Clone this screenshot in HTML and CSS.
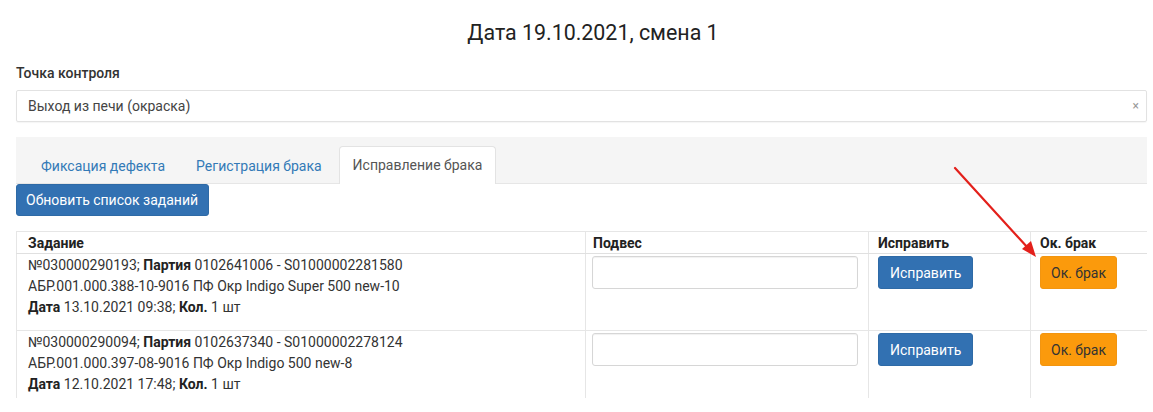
FILE: index.html
```html
<!DOCTYPE html>
<html lang="ru">
<head>
<meta charset="utf-8">
<title>Исправление брака</title>
<link rel="stylesheet" href="styles.css">
</head>
<body>
<div class="page">
  <h1 class="title">Дата 19.10.2021, смена 1</h1>
  <label class="field-label">Точка контроля</label>
  <div class="select">
    <span class="select-text">Выход из печи (окраска)</span>
    <span class="select-clear">×</span>
  </div>
  <div class="tabs">
    <a class="tab">Фиксация дефекта</a>
    <a class="tab">Регистрация брака</a>
    <a class="tab tab-active">Исправление брака</a>
  </div>
  <button class="btn btn-primary btn-refresh">Обновить список заданий</button>
  <div class="table-wrap">
    <table class="grid">
      <colgroup>
        <col class="c1"><col class="c2"><col class="c3"><col class="c4">
      </colgroup>
      <thead>
        <tr><th class="first">Задание</th><th>Подвес</th><th>Исправить</th><th>Ок. брак</th></tr>
      </thead>
      <tbody>
        <tr>
          <td class="first">
            <div>№030000290193; <b>Партия</b> 0102641006 - S01000002281580</div>
            <div>АБР.001.000.388-10-9016 ПФ Окр Indigo Super 500 new-10</div>
            <div><b>Дата</b> 13.10.2021 09:38; <b>Кол.</b> 1 шт</div>
          </td>
          <td><input class="input" type="text"></td>
          <td><button class="btn btn-primary">Исправить</button></td>
          <td><button class="btn btn-warning">Ок. брак</button></td>
        </tr>
        <tr>
          <td class="first">
            <div>№030000290094; <b>Партия</b> 0102637340 - S01000002278124</div>
            <div>АБР.001.000.397-08-9016 ПФ Окр Indigo 500 new-8</div>
            <div><b>Дата</b> 12.10.2021 17:48; <b>Кол.</b> 1 шт</div>
          </td>
          <td><input class="input" type="text"></td>
          <td><button class="btn btn-primary">Исправить</button></td>
          <td><button class="btn btn-warning">Ок. брак</button></td>
        </tr>
      </tbody>
    </table>
  </div>
</div>
<svg class="arrow" width="1153" height="412" viewBox="0 0 1153 412">
  <line x1="955" y1="168" x2="1028" y2="248" stroke="#e3201b" stroke-width="2.2" stroke-linecap="round"/>
  <polygon points="1036,257 1022,249 1031,241" fill="#e3201b"/>
</svg>
</body>
</html>
```
FILE: styles.css
```css
* { box-sizing: border-box; }
html, body { margin: 0; padding: 0; background: #fff; }
body {
  font-family: Roboto, "Noto Sans", "Liberation Sans", sans-serif;
  font-size: 14px;
  color: #333;
  position: relative;
  width: 1153px;
  height: 412px;
  overflow: hidden;
}
.page {
  padding: 21px 6px 0 16px;
  display: flex;
  flex-direction: column;
  align-items: stretch;
}
.title {
  margin: 0;
  font-size: 21.4px;
  line-height: 24px;
  font-weight: 400;
  color: #222;
  text-align: center;
  padding-left: 23px;
}
.field-label {
  margin-top: 18px;
  line-height: 20px;
  font-weight: 500;
  color: #333;
}
.select {
  margin-top: 7px;
  height: 32px;
  border: 1px solid #e2e2e2;
  border-radius: 2px;
  display: flex;
  align-items: center;
  justify-content: space-between;
  padding: 0 7px 0 11px;
  box-shadow: 0 1px 1px rgba(0,0,0,0.04);
}
.select-text { color: #444; }
.select-clear { color: #999; font-size: 12px; }
.tabs {
  margin-top: 15px;
  height: 47px;
  background: #f5f5f5;
  border-bottom: 1px solid #e6e6e6;
  display: flex;
  align-items: flex-end;
  gap: 3px;
  padding-left: 11px;
}
.tab {
  height: 37px;
  line-height: 36px;
  padding: 0 13px;
  color: #337ab7;
  border: 1px solid transparent;
  border-bottom: none;
  border-radius: 4px 4px 0 0;
  margin-bottom: -1px;
}
.tab-active {
  background: #fff;
  color: #555;
  border-color: #e3e3e3;
  height: 38px;
}
.btn {
  font-family: inherit;
  font-size: 14px;
  line-height: 20px;
  padding: 6px 12px;
  border: 1px solid transparent;
  border-radius: 3px;
  cursor: pointer;
  white-space: nowrap;
}
.btn-primary {
  background: #3271b2;
  border-color: #2e6aa6;
  color: #fff;
}
.btn-warning {
  background: #fb9a0c;
  border-color: #f29510;
  color: #333;
}
.btn-refresh {
  align-self: flex-start;
  height: 32px;
  padding: 0 10px 0 9px;
}
.table-wrap {
  margin-top: 15px;
  height: 167px;
  overflow: hidden;
}
.grid {
  width: 1131px;
  table-layout: fixed;
  border-collapse: collapse;
  border: 1px solid #e6e6e6;
}
.c1 { width: 569px; }
.c2 { width: 283px; }
.c3 { width: 162px; }
.c4 { width: 117px; }
.grid th {
  text-align: left;
  font-weight: 700;
  color: #222;
  line-height: 20px;
  padding: 1px 8px 0 9px;
  border-left: 1px solid #e6e6e6;
  border-bottom: 1px solid #e0e0e0;
  border-top: 1px solid #e6e6e6;
}
.grid td {
  vertical-align: top;
  line-height: 21px;
  padding: 1px 8px 12px 9px;
  border-left: 1px solid #e6e6e6;
  border-bottom: 1px solid #e6e6e6;
}
.grid td.first, .grid th.first { padding-left: 11px; }
.grid th:nth-child(2) { padding-left: 7px; }
.grid td:nth-child(2) { padding-left: 6px; padding-right: 10px; }
.grid td b { font-weight: 700; color: #222; }
.input {
  display: block;
  width: 100%;
  height: 33px;
  margin-top: 1px;
  border: 1px solid #d6d6d6;
  border-radius: 3px;
  box-shadow: inset 0 1px 1px rgba(0,0,0,0.06);
  font-family: inherit;
  font-size: 14px;
}
.grid td .btn { margin-top: 1px; height: 33px; padding: 0 11px; }
.grid td .btn-warning { padding: 0 10px; }
.arrow {
  position: absolute;
  left: 0;
  top: 0;
  pointer-events: none;
}
```
